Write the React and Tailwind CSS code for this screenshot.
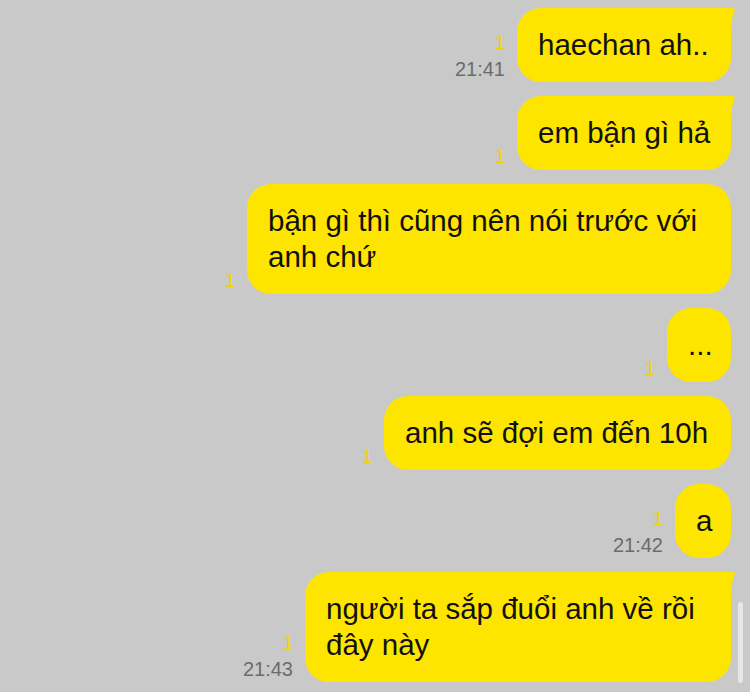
import React from "react";

const messages = [
  { lines: ["haechan ah.."], tail: true, time: "21:41", w: "w-[214px]" },
  { lines: ["em bận gì hả"], tail: true, w: "w-[214px]" },
  { lines: ["bận gì thì cũng nên nói trước với", "anh chứ"], w: "w-[484px]" },
  { lines: ["..."], w: "w-[64px]" },
  { lines: ["anh sẽ đợi em đến 10h"], w: "w-[347px]" },
  { lines: ["a"], time: "21:42", w: "w-[56px]" },
  { lines: ["người ta sắp đuổi anh về rồi", "đây này"], tail: true, time: "21:43", w: "w-[426px]" },
];

function Tail() {
  return (
    <svg
      className="absolute top-0 left-full"
      width="6"
      height="24"
      viewBox="0 0 6 24"
    >
      <path d="M0 0 L4.8 1.2 Q0.6 7 0 22 Z" fill="#fee500" />
    </svg>
  );
}

function Row({ m }) {
  return (
    <div className="flex justify-end items-end pr-[19px]">
      <div className="flex flex-col items-end mr-[12px]">
        <span className="leading-[26px] text-[18px] text-[#f2d300]">1</span>
        {m.time && (
          <span className="leading-[26px] text-[20px] text-[#6b6b6b]">{m.time}</span>
        )}
      </div>
      <div
        className={
          "relative bg-[#fee500] px-[21px] py-[19px] text-[29.5px] leading-[36px] text-[#111] whitespace-nowrap " +
          m.w +
          (m.tail ? " rounded-[24px] rounded-tr-none" : " rounded-[24px]")
        }
      >
        {m.lines.map((l, i) => (
          <div key={i}>{l}</div>
        ))}
        {m.tail && <Tail />}
      </div>
    </div>
  );
}

export default function App() {
  return (
    <div
      className="relative w-[750px] h-[692px] overflow-hidden bg-[#c9c9c9] flex flex-col gap-[14px] pt-[8px]"
      style={{ fontFamily: '"Liberation Sans", Arial, sans-serif' }}
    >
      {messages.map((m, i) => (
        <Row key={i} m={m} />
      ))}
      <div className="absolute left-[738px] top-[602px] w-[5px] h-[81px] rounded-full bg-[#e6e6e6]" />
    </div>
  );
}
